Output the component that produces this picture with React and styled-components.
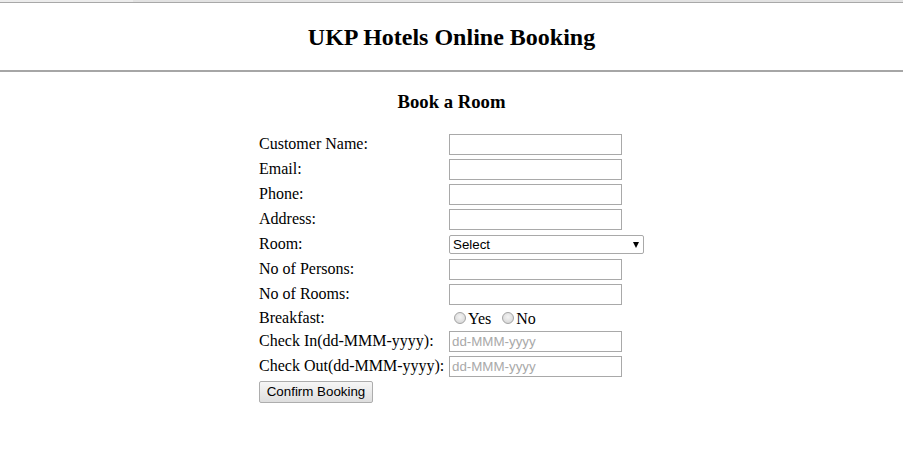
import React from "react";
import styled, { createGlobalStyle } from "styled-components";

const Global = createGlobalStyle`
  html, body { margin: 0; padding: 0; background: #fff; }
  body { font-family: "Liberation Serif", "Times New Roman", serif; font-size: 16px; color: #000; }
`;

const TopStrip = styled.div`
  height: 3px;
  background: linear-gradient(to right, #ececec 0, #ececec 133px, #e2e2e2 133px, #e2e2e2 100%);
  border-bottom: 1px solid #a8a8a8;
  box-sizing: border-box;
`;

const Header = styled.header`
  height: 67px;
  display: flex;
  align-items: center;
  justify-content: center;
  border-bottom: 2px solid #a6a6a6;
`;

const Title = styled.h1`
  margin: 0;
  font-size: 24px;
  font-weight: bold;
  line-height: 28px;
`;

const Main = styled.main`
  padding-top: 19px;
  display: flex;
  flex-direction: column;
  align-items: center;
`;

const FormTitle = styled.h3`
  margin: 0 0 20px 0;
  font-size: 18.72px;
  line-height: 22px;
  font-weight: bold;
`;

const Form = styled.form`
  display: grid;
  grid-template-columns: 186px 195px;
  grid-template-rows: repeat(7, 23px) 20px repeat(3, 23px);
  column-gap: 4px;
  row-gap: 2px;
`;

const Label = styled.label`
  display: flex;
  align-items: center;
  white-space: nowrap;
  line-height: 18px;
  padding-bottom: 1px;
`;

const Cell = styled.div`
  display: flex;
  align-items: center;
`;

const TextInput = styled.input`
  box-sizing: border-box;
  width: 173px;
  height: 21px;
  margin: 0;
  padding: 1px 2px;
  border: 1px solid #a9a9a9;
  font-family: "Liberation Sans", Arial, sans-serif;
  font-size: 13.33px;
  outline: none;
  &::placeholder { color: #a9a9a9; opacity: 1; }
`;

const SelectBox = styled.div`
  position: relative;
  width: 195px;
  height: 19px;
  margin-top: -1px;
`;

const Select = styled.select`
  appearance: none;
  box-sizing: border-box;
  width: 195px;
  height: 19px;
  margin: 0;
  padding: 0 18px 0 3px;
  border: 1px solid #a9a9a9;
  border-radius: 2px;
  background: #fff;
  font-family: "Liberation Sans", Arial, sans-serif;
  font-size: 13.33px;
  color: #000;
`;

const Arrow = styled.span`
  position: absolute;
  right: 5px;
  top: 7px;
  width: 0;
  height: 0;
  border-left: 3.5px solid transparent;
  border-right: 3.5px solid transparent;
  border-top: 6px solid #000;
  pointer-events: none;
`;

const RadioGroup = styled.div`
  display: flex;
  align-items: center;
  line-height: 18px;
`;

const Radio = styled.input`
  appearance: none;
  box-sizing: border-box;
  width: 12px;
  height: 12px;
  margin: 0 2px 0 5px;
  border-radius: 50%;
  border: 1px solid #a4a4a4;
  background: radial-gradient(circle at 50% 40%, #f4f4f4 0, #dcdcdc 70%, #cfcfcf 100%);
`;

const RadioText = styled.span`
  margin-right: 6px;
  padding-top: 2px;
`;

const Button = styled.button`
  box-sizing: border-box;
  width: 114px;
  height: 22px;
  margin: 0;
  padding: 0 6px;
  border: 1px solid #adadad;
  border-radius: 2px;
  background: linear-gradient(#f6f6f6, #dedede);
  font-family: "Liberation Sans", Arial, sans-serif;
  font-size: 13.33px;
  color: #000;
  white-space: nowrap;
`;

const textFields = [
  ["Customer Name:", "name"],
  ["Email:", "email"],
  ["Phone:", "phone"],
  ["Address:", "address"],
];

export default function App() {
  return (
    <>
      <Global />
      <TopStrip />
      <Header>
        <Title>UKP Hotels Online Booking</Title>
      </Header>
      <Main>
        <FormTitle>Book a Room</FormTitle>
        <Form onSubmit={(e) => e.preventDefault()}>
          {textFields.map(([label, id]) => (
            <React.Fragment key={id}>
              <Label htmlFor={id}>{label}</Label>
              <Cell><TextInput id={id} type="text" /></Cell>
            </React.Fragment>
          ))}
          <Label htmlFor="room">Room:</Label>
          <Cell>
            <SelectBox>
              <Select id="room" defaultValue="">
                <option value="">Select</option>
              </Select>
              <Arrow />
            </SelectBox>
          </Cell>
          <Label htmlFor="persons">No of Persons:</Label>
          <Cell><TextInput id="persons" type="text" /></Cell>
          <Label htmlFor="rooms">No of Rooms:</Label>
          <Cell><TextInput id="rooms" type="text" /></Cell>
          <Label>Breakfast:</Label>
          <RadioGroup>
            <Radio type="radio" name="bf" /><RadioText>Yes</RadioText>
            <Radio type="radio" name="bf" /><RadioText>No</RadioText>
          </RadioGroup>
          <Label htmlFor="cin">Check In(dd-MMM-yyyy):</Label>
          <Cell><TextInput id="cin" type="text" placeholder="dd-MMM-yyyy" /></Cell>
          <Label htmlFor="cout">Check Out(dd-MMM-yyyy):</Label>
          <Cell><TextInput id="cout" type="text" placeholder="dd-MMM-yyyy" /></Cell>
          <Cell><Button type="submit">Confirm Booking</Button></Cell>
        </Form>
      </Main>
    </>
  );
}
